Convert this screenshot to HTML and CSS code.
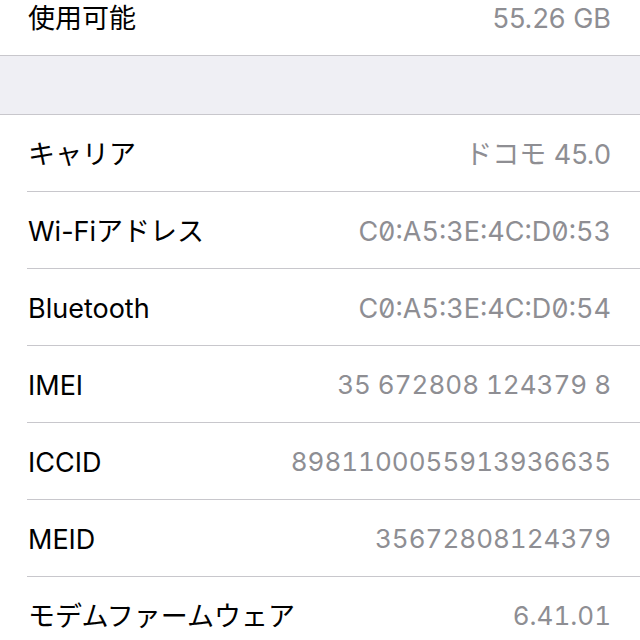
FILE: index.html
```html
<!DOCTYPE html>
<html lang="ja">
<head>
<meta charset="utf-8">
<link rel="stylesheet" href="styles.css">
</head>
<body>
<div class="screen">
  <section class="group group-top">
    <div class="row last">
      <span class="label">使用可能</span>
      <span class="value">55.26 GB</span>
    </div>
  </section>
  <div class="gap"></div>
  <section class="group">
    <div class="row">
      <span class="label">キャリア</span>
      <span class="value">ドコモ 45.0</span>
    </div>
    <div class="row">
      <span class="label">Wi-Fiアドレス</span>
      <span class="value mono zero">C0:A5:3E:4C:D0:53</span>
    </div>
    <div class="row">
      <span class="label">Bluetooth</span>
      <span class="value mono zero">C0:A5:3E:4C:D0:54</span>
    </div>
    <div class="row">
      <span class="label">IMEI</span>
      <span class="value mono num">35 672808 124379 8</span>
    </div>
    <div class="row">
      <span class="label">ICCID</span>
      <span class="value mono num">8981100055913936635</span>
    </div>
    <div class="row">
      <span class="label">MEID</span>
      <span class="value mono num">35672808124379</span>
    </div>
    <div class="row">
      <span class="label">モデムファームウェア</span>
      <span class="value mono num">6.41.01</span>
    </div>
  </section>
</div>
</body>
</html>
```

FILE: styles.css
```css
html, body {
  margin: 0;
  padding: 0;
  background: #ffffff;
}

body {
  font-family: Inter, "Noto Sans CJK JP", sans-serif;
  font-size: 27px;
  color: #000000;
  overflow: hidden;
}

.screen {
  width: 640px;
  height: 640px;
  overflow: hidden;
}

.group {
  background: #ffffff;
}

.group-top {
  margin-top: -21px;
  border-bottom: 1px solid #c8c7cc;
}

.gap {
  height: 58px;
  background: #efeff4;
  border-bottom: 1px solid #c8c7cc;
}

.row {
  box-sizing: border-box;
  display: flex;
  align-items: center;
  justify-content: space-between;
  height: 77px;
  margin-left: 27px;
  padding-left: 1px;
  padding-right: 29px;
  padding-top: 2px;
  border-bottom: 1px solid #c8c7cc;
}

.row.last {
  height: 76px;
  border-bottom: none;
}

.row > span {
  line-height: 1;
}

.label {
  color: #000000;
}

.value {
  color: #8e8e93;
}

.mono {
  font-variant-numeric: tabular-nums;
}

.num {
  font-size: 26px;
}

.zero {
  font-feature-settings: "tnum" 1, "zero" 1;
}
```
